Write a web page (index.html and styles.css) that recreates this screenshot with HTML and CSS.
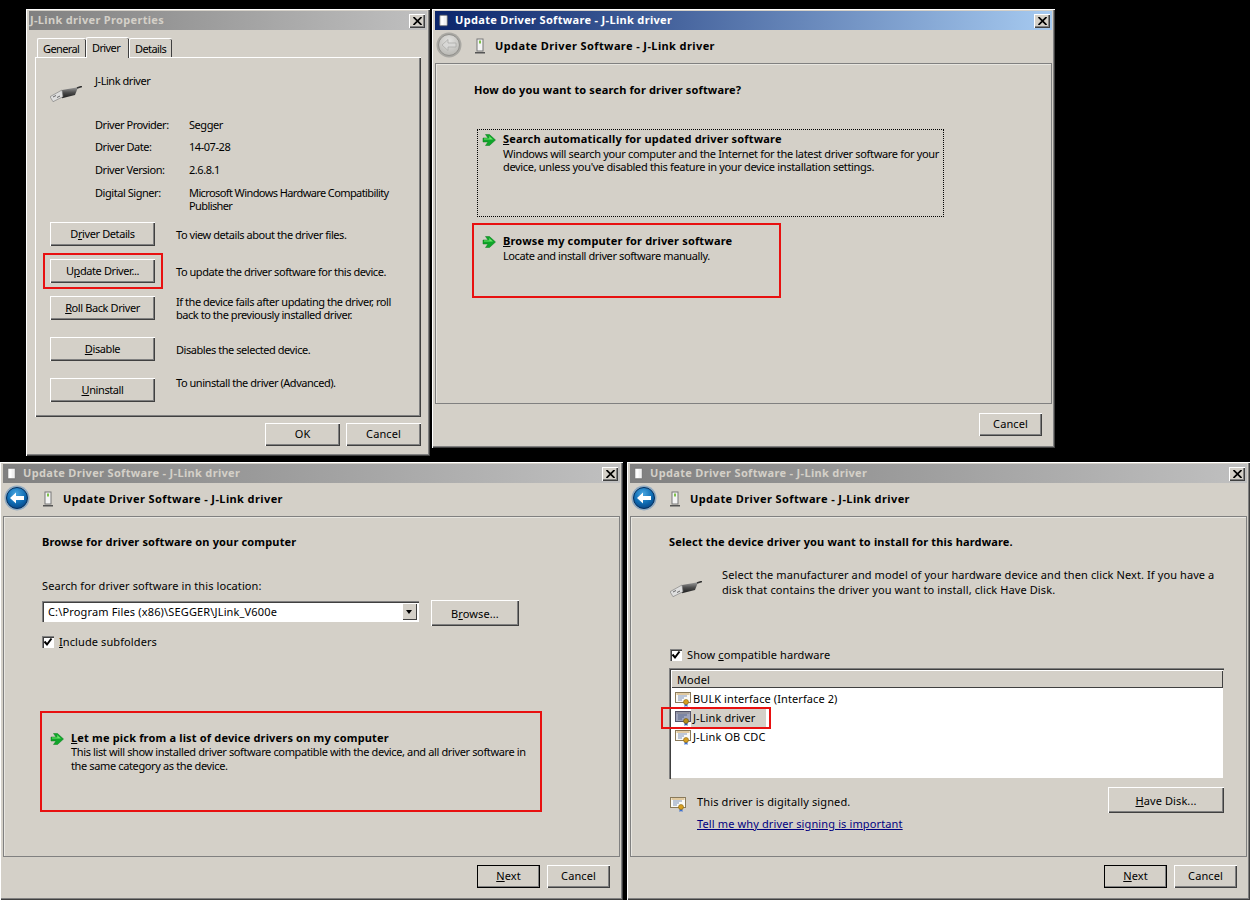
FILE: index.html
```html
<!DOCTYPE html>
<html lang="en">
<head>
<meta charset="utf-8">
<title>J-Link driver installation</title>
<link rel="stylesheet" href="styles.css">
</head>
<body>
<svg class="defs" width="0" height="0" aria-hidden="true">
  <defs>
    <linearGradient id="gUsb" x1="0" y1="0" x2="0" y2="1"><stop offset="0" stop-color="#9a9a9a"/><stop offset="0.5" stop-color="#4a4a4a"/><stop offset="1" stop-color="#1c1c1c"/></linearGradient>
    <radialGradient id="gBack" cx="0.45" cy="0.3" r="0.8"><stop offset="0" stop-color="#4aa6e0"/><stop offset="0.55" stop-color="#0f6db4"/><stop offset="1" stop-color="#063a78"/></radialGradient>
    <radialGradient id="gBackOff" cx="0.5" cy="0.3" r="0.8"><stop offset="0" stop-color="#e2e2e0"/><stop offset="1" stop-color="#b4b3ae"/></radialGradient>
    <symbol id="usb" viewBox="0 0 32 16">
      <path d="M12 4 L28 1.3 L25 9 L12 12.3 Z" fill="url(#gUsb)"/>
      <path d="M0 10.7 L12 4 L13 10.7 L3 15.7 Z" fill="#dedede" stroke="#777" stroke-width="0.6"/>
      <path d="M3 11 L6 9.5 M7 11.5 L10 10" stroke="#666" stroke-width="1"/>
      <path d="M27 2 L32 0.3" stroke="#333" stroke-width="1.6" fill="none"/>
    </symbol>
    <symbol id="dev" viewBox="0 0 12 16">
      <rect x="3" y="1" width="6" height="12" fill="#f4f4f4" stroke="#777"/>
      <rect x="5" y="2.5" width="2" height="3" fill="#7fc24a"/>
      <rect x="1" y="14" width="10" height="1.5" fill="#555"/>
    </symbol>
    <symbol id="devw" viewBox="0 0 12 16">
      <rect x="1" y="1" width="10" height="14" rx="1" fill="#f2f2f2" stroke="#666"/>
      <rect x="3" y="2" width="3" height="12" fill="#fff"/>
    </symbol>
    <symbol id="arrow" viewBox="0 0 14 14">
      <path d="M1 5 H6 L3.5 1.5 H7.5 L13.5 7 L7.5 12.5 H3.5 L6 9 H1 Z" fill="#10a52a" stroke="#0b7d1c" stroke-width="0.5"/>
      <path d="M7 3 L11 6.5 H2 V5.6 H7.5 Z" fill="#6ee86c"/>
    </symbol>
    <symbol id="cert" viewBox="0 0 16 16">
      <rect x="0.5" y="1.5" width="15" height="10" fill="#fafaf6" stroke="#8a7a5a"/>
      <rect x="1.5" y="2.5" width="13" height="1" fill="#c79a4a"/>
      <path d="M3 5 H12 M3 7 H9 M3 9 H7" stroke="#7f93b8"/>
      <path d="M9.5 12 V16 L11 15 L12.5 16 V12 Z" fill="#3a6fd0"/>
      <circle cx="11" cy="11" r="2.5" fill="#d8a020" stroke="#8a6410" stroke-width="0.6"/>
    </symbol>
    <symbol id="certsel" viewBox="0 0 16 16">
      <rect x="0.5" y="1.5" width="15" height="10" fill="#9ea4bc" stroke="#55556a"/>
      <rect x="1.5" y="2.5" width="13" height="1" fill="#7d7a80"/>
      <path d="M3 5 H12 M3 7 H9 M3 9 H7" stroke="#5a688c"/>
      <path d="M9.5 12 V16 L11 15 L12.5 16 V12 Z" fill="#2f5bb0"/>
      <circle cx="11" cy="11" r="2.5" fill="#b8901c" stroke="#6a5010" stroke-width="0.6"/>
    </symbol>
  </defs>
</svg>

<section class="window win-props">
  <div class="title inactive"><span class="title-text props-title">J-Link driver Properties</span><button class="close" aria-label="Close"><svg viewBox="0 0 9 8" width="9" height="8"><path d="M0.5 0 L8.5 8 M8.5 0 L0.5 8" stroke="#000" stroke-width="1.7"/></svg></button></div>
  <div class="tabs">
    <span class="tab t-general">General</span>
    <span class="tab t-driver">Driver</span>
    <span class="tab t-details">Details</span>
  </div>
  <div class="props-panel">
    <div class="props-head"><svg class="usb"><use href="#usb"/></svg><span>J-Link driver</span></div>
    <dl class="facts">
      <dt>Driver Provider:</dt><dd>Segger</dd>
      <dt>Driver Date:</dt><dd>14-07-28</dd>
      <dt>Driver Version:</dt><dd>2.6.8.1</dd>
      <dt>Digital Signer:</dt><dd>Microsoft Windows Hardware Compatibility Publisher</dd>
    </dl>
    <div class="actions">
      <div class="action"><button class="btn act-btn">D<u>r</u>iver Details</button><p>To view details about the driver files.</p></div>
      <div class="action"><button class="btn act-btn">U<u>p</u>date Driver...</button><p>To update the driver software for this device.</p></div>
      <div class="action"><button class="btn act-btn"><u>R</u>oll Back Driver</button><p class="two">If the device fails after updating the driver, roll back to the previously installed driver.</p></div>
      <div class="action"><button class="btn act-btn"><u>D</u>isable</button><p>Disables the selected device.</p></div>
      <div class="action"><button class="btn act-btn"><u>U</u>ninstall</button><p class="up">To uninstall the driver (Advanced).</p></div>
    </div>
  </div>
  <div class="props-foot"><button class="btn ok">OK</button><button class="btn ok">Cancel</button></div>
  <div class="red red-update"></div>
</section>

<section class="window wizard win-search">
  <div class="title active"><svg class="tico"><use href="#devw"/></svg><span class="title-text">Update Driver Software - J-Link driver</span><button class="close" aria-label="Close"><svg viewBox="0 0 9 8" width="9" height="8"><path d="M0.5 0 L8.5 8 M8.5 0 L0.5 8" stroke="#000" stroke-width="1.7"/></svg></button></div>
  <div class="wiz-head">
    <svg class="back" viewBox="0 0 26 26"><circle cx="13" cy="13" r="12.5" fill="#a9a8a3"/><circle cx="13" cy="13" r="10.5" fill="url(#gBackOff)" stroke="#8f8e8a"/><path d="M6 13 L12 7.5 V11 H20 V15 H12 V18.5 Z" fill="#d8d8d6" stroke="#a8a8a4" stroke-width="0.7"/></svg>
    <svg class="hdev"><use href="#dev"/></svg>
    <strong>Update Driver Software - J-Link driver</strong>
  </div>
  <div class="wiz-panel search-panel">
    <h2>How do you want to search for driver software?</h2>
    <div class="choice focus">
      <svg class="arrow"><use href="#arrow"/></svg>
      <div><h3><u>S</u>earch automatically for updated driver software</h3>
      <p>Windows will search your computer and the Internet for the latest driver software for your device, unless you've disabled this feature in your device installation settings.</p></div>
    </div>
    <div class="choice second">
      <svg class="arrow"><use href="#arrow"/></svg>
      <div><h3><u>B</u>rowse my computer for driver software</h3>
      <p>Locate and install driver software manually.</p></div>
    </div>
  </div>
  <div class="wiz-foot"><button class="btn foot-btn">Cancel</button></div>
  <div class="red red-browse"></div>
</section>

<section class="window wizard win-browse">
  <div class="title inactive"><svg class="tico"><use href="#devw"/></svg><span class="title-text">Update Driver Software - J-Link driver</span><button class="close" aria-label="Close"><svg viewBox="0 0 9 8" width="9" height="8"><path d="M0.5 0 L8.5 8 M8.5 0 L0.5 8" stroke="#000" stroke-width="1.7"/></svg></button></div>
  <div class="wiz-head">
    <svg class="back" viewBox="0 0 26 26"><circle cx="13" cy="13" r="12.5" fill="#8fa9c0"/><circle cx="13" cy="13" r="10.5" fill="url(#gBack)" stroke="#04305f"/><path d="M6 13 L12 7.5 V11 H20 V15 H12 V18.5 Z" fill="#fff"/></svg>
    <svg class="hdev"><use href="#dev"/></svg>
    <strong>Update Driver Software - J-Link driver</strong>
  </div>
  <div class="wiz-panel browse-panel">
    <h2>Browse for driver software on your computer</h2>
    <label class="loc-label">Search for driver software in this location:</label>
    <div class="loc-row">
      <div class="combo"><span>C:\Program Files (x86)\SEGGER\JLink_V600e</span><i class="combo-btn"></i></div>
      <button class="btn browse-btn">B<u>r</u>owse...</button>
    </div>
    <div class="check-row"><span class="check"><svg viewBox="0 0 10 10" width="10" height="10"><path d="M1.5 4.5 L4 7.5 L8.5 1.5" fill="none" stroke="#000" stroke-width="2"/></svg></span><span><u>I</u>nclude subfolders</span></div>
    <div class="choice third">
      <svg class="arrow"><use href="#arrow"/></svg>
      <div><h3><u>L</u>et me pick from a list of device drivers on my computer</h3>
      <p>This list will show installed driver software compatible with the device, and all driver software in the same category as the device.</p></div>
    </div>
  </div>
  <div class="wiz-foot"><button class="btn foot-btn default"><u>N</u>ext</button><button class="btn foot-btn">Cancel</button></div>
  <div class="red red-pick"></div>
</section>

<section class="window wizard win-select">
  <div class="title inactive"><svg class="tico"><use href="#devw"/></svg><span class="title-text">Update Driver Software - J-Link driver</span><button class="close" aria-label="Close"><svg viewBox="0 0 9 8" width="9" height="8"><path d="M0.5 0 L8.5 8 M8.5 0 L0.5 8" stroke="#000" stroke-width="1.7"/></svg></button></div>
  <div class="wiz-head">
    <svg class="back" viewBox="0 0 26 26"><circle cx="13" cy="13" r="12.5" fill="#8fa9c0"/><circle cx="13" cy="13" r="10.5" fill="url(#gBack)" stroke="#04305f"/><path d="M6 13 L12 7.5 V11 H20 V15 H12 V18.5 Z" fill="#fff"/></svg>
    <svg class="hdev"><use href="#dev"/></svg>
    <strong>Update Driver Software - J-Link driver</strong>
  </div>
  <div class="wiz-panel select-panel">
    <h2>Select the device driver you want to install for this hardware.</h2>
    <div class="intro"><svg class="usb"><use href="#usb"/></svg><p>Select the manufacturer and model of your hardware device and then click Next. If you have a disk that contains the driver you want to install, click Have Disk.</p></div>
    <div class="check-row compat"><span class="check"><svg viewBox="0 0 10 10" width="10" height="10"><path d="M1.5 4.5 L4 7.5 L8.5 1.5" fill="none" stroke="#000" stroke-width="2"/></svg></span><span>Show <u>c</u>ompatible hardware</span></div>
    <div class="list">
      <div class="list-head">Model</div>
      <div class="item"><svg class="cert"><use href="#cert"/></svg><span>BULK interface (Interface 2)</span></div>
      <div class="item selected"><svg class="cert"><use href="#certsel"/></svg><span>J-Link driver</span></div>
      <div class="item"><svg class="cert"><use href="#cert"/></svg><span>J-Link OB CDC</span></div>
    </div>
    <div class="sign-row">
      <svg class="cert sign-cert"><use href="#cert"/></svg>
      <div class="sign-text"><p>This driver is digitally signed.</p><a href="#">Tell me why driver signing is important</a></div>
      <button class="btn disk-btn"><u>H</u>ave Disk...</button>
    </div>
  </div>
  <div class="wiz-foot"><button class="btn foot-btn default"><u>N</u>ext</button><button class="btn foot-btn">Cancel</button></div>
  <div class="red red-item"></div>
</section>
</body>
</html>
```
FILE: styles.css
```css
* { box-sizing: border-box; }
html, body { margin: 0; height: 900px; overflow: hidden; }
body { background: #000; position: relative; font: 11px/13px "Noto Sans", sans-serif; letter-spacing: 0.1px; color: #000; }
.defs { position: absolute; }
h2, h3, p, dl, dd { margin: 0; font-size: inherit; }
u { text-underline-offset: 1px; }
button { font: inherit; color: inherit; padding: 0; letter-spacing: inherit; }

.window { position: absolute; display: flex; flex-direction: column; background: #d4d0c8; padding: 1px 3px 3px 2px; border-top: 1px solid #fff; border-left: 1px solid #fff; box-shadow: inset -1px -1px 0 #404040, inset -2px -2px 0 #808080; }
.win-props { left: 26px; top: 9px; width: 404px; height: 447px; }
.win-search { left: 432px; top: 9px; width: 623px; height: 439px; }
.win-browse { left: 0; top: 462px; width: 623px; height: 438px; }
.win-select { left: 627px; top: 462px; width: 623px; height: 438px; }

.title { flex: none; height: 19px; display: flex; align-items: center; padding: 0 2px 0 4px; font-weight: 700; letter-spacing: 0.33px; }
.title.active { background: linear-gradient(90deg, #0a246a, #a6caf0); color: #fff; }
.title.inactive { background: linear-gradient(90deg, #808080, #c0c0c0); color: #d4d0c8; }
.title-text { flex: 1; white-space: nowrap; padding-bottom: 2px; }
.props-title { margin-left: -3px; }
.tico { width: 9px; height: 13px; margin: 0 7px 0 0; flex: none; }
.close { width: 16px; height: 14px; background: #d4d0c8; border: 0; display: flex; align-items: center; justify-content: center; box-shadow: inset 1px 1px 0 #fff, inset -1px -1px 0 #404040, inset -2px -2px 0 #808080; }

.btn { background: #d4d0c8; border: 0; text-align: center; box-shadow: inset 1px 1px 0 #fff, inset -1px -1px 0 #404040, inset -2px -2px 0 #808080; white-space: nowrap; }

/* properties */
.tabs { flex: none; height: 27px; display: flex; align-items: flex-end; padding-left: 8px; letter-spacing: -0.6px; }
.tab { height: 19px; padding: 3px 0 0 5px; border-left: 1px solid #fff; border-top: 1px solid #fff; box-shadow: inset -1px 0 0 #404040; border-radius: 2px 2px 0 0; }
.t-general { width: 49px; }
.t-driver { width: 43px; height: 21px; padding: 3px 0 0 5px; position: relative; top: 1px; z-index: 1; background: #d4d0c8; }
.t-details { width: 43px; }
.props-panel { flex: none; height: 360px; margin: 0 6px 0 6px; border-top: 1px solid #fff; border-left: 1px solid #fff; box-shadow: inset -1px -1px 0 #404040, inset -2px -2px 0 #808080; padding: 16px 14px 0; letter-spacing: -0.45px; }
.props-head { display: flex; height: 44px; }
.props-head .usb { width: 32px; height: 16px; margin: 12px 13px 0 0; }
.facts { display: grid; grid-template-columns: 94px 222px; grid-template-rows: 22px 23px 23px auto; margin: 0 0 0 45px; height: 98px; }
.facts dd:last-child { letter-spacing: -0.6px; }
.actions { display: flex; flex-direction: column; margin-top: 6px; }
.action { display: flex; gap: 21px; height: 24px; margin-bottom: 13px; }
.action:nth-child(3) { margin-bottom: 17px; }
.action:nth-child(4) { margin-bottom: 17px; }
.action p { line-height: 13px; padding-top: 6px; white-space: nowrap; }
.action p.two { padding-top: 0; margin-top: -1px; white-space: normal; width: 224px; }
.action p.up { padding-top: 0; margin-top: -2px; }
.act-btn { width: 105px; height: 24px; flex: none; letter-spacing: -0.4px; padding-bottom: 2px; }
.props-foot { flex: none; display: flex; justify-content: flex-end; gap: 6px; padding: 6px 6px 0 0; }
.ok { width: 75px; height: 23px; padding-bottom: 2px; }

/* wizard */
.wiz-head { flex: none; height: 33px; display: flex; align-items: center; padding-left: 1px; }
.back { width: 26px; height: 26px; flex: none; margin-bottom: 4px; }
.hdev { width: 12px; height: 16px; margin: 0 9px 2px 12px; flex: none; }
.wiz-head strong { font-weight: 700; letter-spacing: 0.4px; padding-bottom: 3px; }
.wiz-panel { flex: none; height: 341px; border: 1px solid #808080; box-shadow: inset 1px 1px 0 #e8e6e0; padding-top: 18px; }
.wiz-panel h2 { font-size: 11px; line-height: 13px; font-weight: 700; letter-spacing: 0.15px; }
.wiz-foot { flex: 1; display: flex; justify-content: flex-end; gap: 7px; padding: 8px 10px 0 0; }
.win-search .wiz-foot { padding-top: 9px; }
.foot-btn { width: 63px; height: 23px; padding-bottom: 2px; }
.foot-btn.default { outline: 1px solid #000; outline-offset: -1px; }

.choice { display: flex; gap: 7px; }
.choice h3 { font-weight: 700; line-height: 14px; font-size: 11px; letter-spacing: 0.17px; margin-bottom: 1px; }
.choice p { line-height: 13px; letter-spacing: -0.4px; }
.arrow { width: 14px; height: 14px; flex: none; margin-top: 1px; }
.search-panel { padding-left: 38px; padding-top: 19px; }
.search-panel h2 { margin-bottom: 33px; }
.focus { margin-left: 3px; width: 467px; height: 88px; border: 1px dotted #000; padding: 2px 4px; }
.focus p { width: 445px; letter-spacing: -0.33px; }
.second { margin-left: 8px; margin-top: 17px; }
.browse-panel { padding-left: 38px; }
.loc-label { display: block; margin-top: 31px; }
.loc-row { display: flex; align-items: flex-start; gap: 12px; margin-top: 8px; }
.combo { width: 377px; height: 21px; background: #fff; display: flex; align-items: center; padding: 0 2px 0 6px; box-shadow: inset 1px 1px 0 #808080, inset 2px 2px 0 #404040, inset -1px -1px 0 #fff; margin-top: 1px; letter-spacing: 0.15px; }
.combo span { flex: 1; }
.combo-btn { width: 15px; height: 17px; background: #d4d0c8; box-shadow: inset 1px 1px 0 #fff, inset -1px -1px 0 #404040; position: relative; }
.combo-btn::after { content: ""; position: absolute; left: 4px; top: 7px; border: 3.5px solid transparent; border-top: 4px solid #000; border-bottom: 0; }
.browse-btn { width: 88px; height: 26px; }
.check-row { display: flex; align-items: center; gap: 5px; margin-top: 9px; }
.check { width: 12px; height: 12px; flex: none; background: #fff; display: flex; align-items: center; justify-content: center; box-shadow: inset 1px 1px 0 #808080, inset 2px 2px 0 #404040; }
.third { margin-left: 8px; margin-top: 83px; }
.third h3 { margin-bottom: 0; }
.third p { width: 462px; line-height: 14px; letter-spacing: -0.37px; }

.select-panel { padding-left: 38px; }
.intro { display: flex; height: 53px; margin-top: 19px; }
.intro .usb { width: 32px; height: 16px; margin: 14px 20px 0 1px; }
.intro p { width: 500px; line-height: 15px; }
.compat { margin: 28px 0 0 1px; }
.list { width: 555px; height: 111px; background: #fff; margin-top: 7px; box-shadow: inset 1px 1px 0 #808080, inset 2px 2px 0 #404040, inset -1px -1px 0 #d4d0c8; padding: 2px 1px 0 2px; }
.list-head { height: 18px; margin-bottom: 1px; background: #d4d0c8; padding: 3px 0 0 6px; box-shadow: inset 1px 1px 0 #fff, inset -1px -1px 0 #404040; }
.item { height: 19px; display: flex; align-items: center; padding-left: 4px; }
.item span { padding-left: 2px; }
.item.selected span { background: #d4d0c8; padding: 3px 11px 3px 2px; height: 19px; }
.cert { width: 16px; height: 16px; flex: none; }
.sign-row { display: flex; margin-top: 8px; width: 555px; }
.sign-cert { margin: 9px 11px 0 1px; }
.sign-text { flex: 1; padding-top: 8px; letter-spacing: 0.13px; }
.sign-text a { display: block; margin-top: 9px; color: #000080; text-decoration: underline; }
.disk-btn { width: 116px; height: 26px; }

.red { position: absolute; border: 2px solid #e81010; }
.red-update { left: 16px; top: 243px; width: 120px; height: 36px; }
.red-browse { left: 39px; top: 213px; width: 309px; height: 75px; }
.red-pick { left: 39px; top: 248px; width: 502px; height: 101px; }
.red-item { left: 33px; top: 244px; width: 110px; height: 22px; }
```
